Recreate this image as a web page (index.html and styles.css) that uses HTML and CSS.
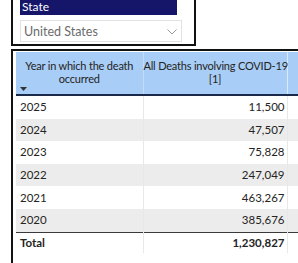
FILE: index.html
```html
<!DOCTYPE html>
<html>
<head>
<meta charset="utf-8">
<link rel="stylesheet" href="styles.css">
</head>
<body>
<div class="slicer">
  <div class="slicer-title">State</div>
  <div class="dropdown">
    <span class="dropdown-value">United States</span>
    <svg class="chev" width="10" height="6" viewBox="0 0 10 6"><path d="M0.5 0.5 L5 5 L9.5 0.5" fill="none" stroke="#8a8a8a" stroke-width="0.9"/></svg>
  </div>
</div>
<div class="panel">
  <table class="grid">
    <colgroup><col class="c1"><col class="c2"><col class="c3"></colgroup>
    <thead>
      <tr>
        <th class="h1"><div>Year in which the death<br>occurred</div><svg class="sort" width="7" height="4" viewBox="0 0 7 4"><path d="M0 0 H7 L3.5 4 Z" fill="#333"/></svg></th>
        <th class="h2"><div>All Deaths involving COVID-19<br>[1]</div></th>
        <th class="h3"></th>
      </tr>
    </thead>
    <tbody>
      <tr><td>2025</td><td class="num">11,500</td><td></td></tr>
      <tr class="alt"><td>2024</td><td class="num">47,507</td><td></td></tr>
      <tr><td>2023</td><td class="num">75,828</td><td></td></tr>
      <tr class="alt"><td>2022</td><td class="num">247,049</td><td></td></tr>
      <tr><td>2021</td><td class="num">463,267</td><td></td></tr>
      <tr class="alt"><td>2020</td><td class="num">385,676</td><td></td></tr>
      <tr class="total"><td>Total</td><td class="num">1,230,827</td><td></td></tr>
    </tbody>
  </table>
</div>
</body>
</html>
```
FILE: styles.css
```css
html, body {
  margin: 0;
  padding: 0;
  background: #ffffff;
  overflow: hidden;
  width: 298px;
  height: 263px;
}
body {
  font-family: "Lato", "Noto Sans", sans-serif;
  color: #252423;
}
.slicer {
  margin-left: 11px;
  width: 174px;
  border: 2px solid #111;
  border-top: none;
  padding: 0 0 2px 7px;
  display: flex;
  flex-direction: column;
  gap: 5px;
}
.slicer-title {
  width: 157px;
  height: 15px;
  background: #15166a;
  color: #ffffff;
  font-size: 12px;
  line-height: 14px;
  padding-left: 2px;
  box-sizing: border-box;
}
.dropdown {
  width: 162px;
  height: 22px;
  box-sizing: border-box;
  border: 1px solid #e2e2e2;
  display: flex;
  align-items: center;
  justify-content: space-between;
  padding: 0 4px 0 3px;
}
.dropdown-value {
  font-size: 12.5px;
  color: #6b6b6b;
}
.chev { margin-top: 2px; }
.panel {
  margin-top: 3px;
  margin-left: 11px;
  width: 285px;
  height: 212px;
  border-left: 2px solid #111;
  border-top: 2px solid #111;
  padding: 1px 0 0 3px;
  overflow: hidden;
}
.grid {
  border-collapse: collapse;
  table-layout: fixed;
  width: 290px;
  font-size: 11.5px;
}
.c1 { width: 127px; }
.c2 { width: 144px; }
.c3 { width: 19px; }
thead th {
  background: #a8cdf6;
  font-weight: normal;
  height: 42px;
  vertical-align: top;
  padding: 0;
  border-bottom: 2px solid #1b2a4a;
  line-height: 13px;
  white-space: nowrap;
  font-size: 11px;
  letter-spacing: -0.2px;
}
th.h1 {
  border-right: 1px solid #c4dcf7;
  position: relative;
  text-align: center;
}
th.h1 div { padding: 7px 0 0; }
th.h2 div { padding: 7px 0 0; text-align: center; }
th.h2 { border-right: 1px solid #dbe9fb; }
.sort { position: absolute; left: 4px; top: 35px; }
tbody td {
  height: 22.6px;
  padding: 0 0 0 4px;
  line-height: 14px;
}
tbody td:nth-child(1) { border-right: 1px solid #e8e8e8; }
tbody td:nth-child(2) { border-right: 1px solid #e8e8e8; }
td.num { text-align: right; padding: 0 2px 0 0; }
tr.alt td { background: #ececec; }
tr.total td {
  font-weight: bold;
  border-top: 1px solid #3a3a3a;
  height: 20px;
}
```
